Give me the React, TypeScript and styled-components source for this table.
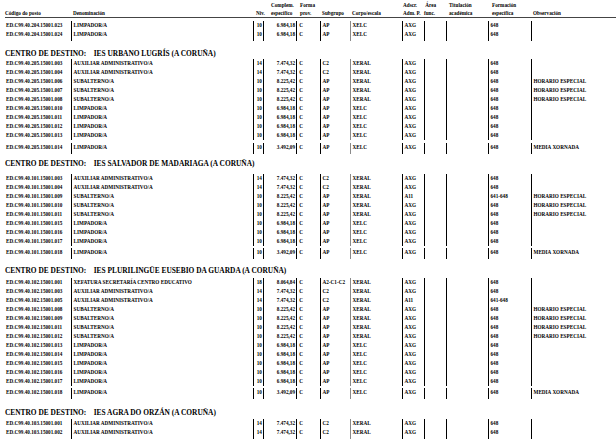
import React from 'react'
import styled, { createGlobalStyle } from 'styled-components'

const GlobalStyle = createGlobalStyle`
  html, body {
    margin: 0;
    padding: 0;
    background: #fff;
  }
  body {
    font-family: 'Liberation Serif', 'Times New Roman', serif;
    color: #000;
  }
`

const COLS = '66px 182px 10px 34px 23px 30px 52px 22px 22px 42px 43px 80px'
const ROW_H = 9

type Line = 'none' | 'black' | 'grey' | 'thick'
type Align = 'left' | 'center' | 'right'

const Page = styled.div`
  width: 616px;
  padding: 0 0 0 5px;
  box-sizing: border-box;
`

const HeadRow = styled.div`
  display: grid;
  grid-template-columns: ${COLS};
  padding-top: 1px;
  border-bottom: 0.8px solid #444;
  font-size: 5.2px;
  font-weight: bold;
  line-height: 8px;
`

const HeadCell = styled.div<{ $shift?: number }>`
  display: flex;
  flex-direction: column;
  justify-content: flex-end;
  padding-left: ${(p) => p.$shift ?? 0}px;
  white-space: nowrap;
  min-height: 16px;
`

const Section = styled.section<{ $top: number }>`
  margin-top: ${(p) => p.$top}px;
`

const SectionTitle = styled.h2<{ $gap: number }>`
  margin: 0 0 ${(p) => p.$gap}px 0;
  font-size: 7.4px;
  font-weight: bold;
  line-height: 8px;
  white-space: pre;
`

const Row = styled.div<{ $extra?: number; $tail?: number }>`
  display: grid;
  grid-template-columns: ${COLS};
  height: ${(p) => ROW_H + (p.$extra ?? 0) + (p.$tail ?? 0)}px;
  padding-top: ${(p) => p.$extra ?? 0}px;
  box-sizing: border-box;
  font-size: 5.2px;
  font-weight: bold;
  line-height: ${ROW_H}px;
  white-space: nowrap;
`

const lineColor: Record<Line, string> = {
  none: 'transparent',
  black: '#000',
  grey: '#8a8a8a',
  thick: '#000',
}

const Cell = styled.div<{ $line?: Line; $align?: Align; $rightLine?: boolean }>`
  box-sizing: border-box;
  overflow: visible;
  margin-top: ${(p) => (p.$line && p.$line !== 'none' ? 0 : 0)}px;
  text-align: ${(p) => p.$align ?? 'left'};
  padding: 0 ${(p) => (p.$align === 'right' ? 1 : 0)}px 0
    ${(p) => (p.$line && p.$line !== 'none' ? 1.5 : 0)}px;
  border-left: ${(p) => (p.$line === 'thick' ? 1.4 : 1)}px solid
    ${(p) => lineColor[p.$line ?? 'none']};
  border-right: ${(p) => (p.$rightLine ? '1px solid #000' : 'none')};
`

// the last row of a block sits a little lower and its rules run on below it
const RowLines = styled.div`
  display: contents;
`

interface Post {
  code: string
  name: string
  niv: string
  comp: string
  sub: string
  corpo: string
  adscr: string
  form: string
  obs?: string
}

interface Centre {
  title?: string
  top: number
  gap: number
  extra: number
  posts: Post[]
}

const limpador = (code: string, comp = '6.984,18', obs?: string): Post => ({
  code,
  name: 'LIMPADOR/A',
  niv: '10',
  comp,
  sub: 'AP',
  corpo: 'XELC',
  adscr: 'AXG',
  form: '648',
  obs,
})

const auxiliar = (code: string, adscr = 'AXG', form = '648'): Post => ({
  code,
  name: 'AUXILIAR ADMINISTRATIVO/A',
  niv: '14',
  comp: '7.474,32',
  sub: 'C2',
  corpo: 'XERAL',
  adscr,
  form,
})

const subalterno = (code: string, adscr = 'AXG', form = '648'): Post => ({
  code,
  name: 'SUBALTERNO/A',
  niv: '10',
  comp: '8.225,42',
  sub: 'AP',
  corpo: 'XERAL',
  adscr,
  form,
  obs: 'HORARIO ESPECIAL',
})

const centres: Centre[] = [
  {
    top: 2.8,
    gap: 0,
    extra: 0,
    posts: [limpador('ED.C99.40.204.15001.023'), limpador('ED.C99.40.204.15001.024')],
  },
  {
    title: 'CENTRO DE DESTINO:    IES URBANO LUGRÍS (A CORUÑA)',
    top: 8.9,
    gap: 1.5,
    extra: 2.5,
    posts: [
      auxiliar('ED.C99.40.205.15001.003'),
      auxiliar('ED.C99.40.205.15001.004'),
      subalterno('ED.C99.40.205.15001.006'),
      subalterno('ED.C99.40.205.15001.007'),
      subalterno('ED.C99.40.205.15001.008'),
      limpador('ED.C99.40.205.15001.010'),
      limpador('ED.C99.40.205.15001.011'),
      limpador('ED.C99.40.205.15001.012'),
      limpador('ED.C99.40.205.15001.013'),
      limpador('ED.C99.40.205.15001.014', '3.492,09', 'MEDIA XORNADA'),
    ],
  },
  {
    title: 'CENTRO DE DESTINO:    IES SALVADOR DE MADARIAGA (A CORUÑA)',
    top: 5.9,
    gap: 6,
    extra: 2.5,
    posts: [
      auxiliar('ED.C99.40.101.15001.003'),
      auxiliar('ED.C99.40.101.15001.004'),
      subalterno('ED.C99.40.101.15001.009', 'A11', '641-648'),
      subalterno('ED.C99.40.101.15001.010'),
      subalterno('ED.C99.40.101.15001.011'),
      limpador('ED.C99.40.101.15001.015'),
      limpador('ED.C99.40.101.15001.016'),
      limpador('ED.C99.40.101.15001.017'),
      limpador('ED.C99.40.101.15001.018', '3.492,09', 'MEDIA XORNADA'),
    ],
  },
  {
    title: 'CENTRO DE DESTINO:    IES PLURILINGÜE EUSEBIO DA GUARDA (A CORUÑA)',
    top: 7.5,
    gap: 3,
    extra: 2.5,
    posts: [
      {
        code: 'ED.C99.40.102.15001.001',
        name: 'XEFATURA SECRETARÍA CENTRO EDUCATIVO',
        niv: '18',
        comp: '8.064,84',
        sub: 'A2-C1-C2',
        corpo: 'XERAL',
        adscr: 'AXG',
        form: '648',
      },
      auxiliar('ED.C99.40.102.15001.003'),
      auxiliar('ED.C99.40.102.15001.005', 'A11', '641-648'),
      subalterno('ED.C99.40.102.15001.008'),
      subalterno('ED.C99.40.102.15001.009'),
      subalterno('ED.C99.40.102.15001.011'),
      subalterno('ED.C99.40.102.15001.012'),
      limpador('ED.C99.40.102.15001.013'),
      limpador('ED.C99.40.102.15001.014'),
      limpador('ED.C99.40.102.15001.015'),
      limpador('ED.C99.40.102.15001.016'),
      limpador('ED.C99.40.102.15001.017'),
      limpador('ED.C99.40.102.15001.018', '3.492,09', 'MEDIA XORNADA'),
    ],
  },
  {
    title: 'CENTRO DE DESTINO:    IES AGRA DO ORZÁN (A CORUÑA)',
    top: 10,
    gap: 2,
    extra: 0,
    posts: [auxiliar('ED.C99.40.103.15001.001'), auxiliar('ED.C99.40.103.15001.002')],
  },
]

const PostRow = ({ post, extra, tail }: { post: Post; extra?: number; tail?: number }) => (
  <Row $extra={extra} $tail={tail}>
    <RowLines>
      <Cell>{post.code}</Cell>
      <Cell $line='black'>{post.name}</Cell>
      <Cell $line='black' $align='center'>
        {post.niv}
      </Cell>
      <Cell $line='black' $align='right' $rightLine>
        {post.comp}
      </Cell>
      <Cell>&nbsp;C</Cell>
      <Cell $line='black'>{post.sub}</Cell>
      <Cell $line='grey'>{post.corpo}</Cell>
      <Cell $line='black'>{post.adscr}</Cell>
      <Cell $line='black' />
      <Cell $line='black' />
      <Cell $line='black'>{post.form}</Cell>
      <Cell $line='thick'>{post.obs}</Cell>
    </RowLines>
  </Row>
)

const Header = () => (
  <HeadRow>
    <HeadCell>Código do posto</HeadCell>
    <HeadCell $shift={2}>Denominación</HeadCell>
    <HeadCell $shift={3}>Niv.</HeadCell>
    <HeadCell $shift={8}>
      <span>Complem.</span>
      <span>específico</span>
    </HeadCell>
    <HeadCell $shift={3}>
      <span>Forma</span>
      <span>prov.</span>
    </HeadCell>
    <HeadCell $shift={2}>Subgrupo</HeadCell>
    <HeadCell $shift={2}>Corpo/escala</HeadCell>
    <HeadCell $shift={1}>
      <span>Adscr.</span>
      <span>Adm. P.</span>
    </HeadCell>
    <HeadCell $shift={0}>
      <span>&nbsp;Área</span>
      <span>func.</span>
    </HeadCell>
    <HeadCell $shift={3}>
      <span>Titulación</span>
      <span>académica</span>
    </HeadCell>
    <HeadCell $shift={4}>
      <span>Formación</span>
      <span>específica</span>
    </HeadCell>
    <HeadCell $shift={2}>Observación</HeadCell>
  </HeadRow>
)

export default function App() {
  return (
    <>
      <GlobalStyle />
      <Page>
        <Header />
        {centres.map((c, i) => (
          <Section key={i} $top={c.top}>
            {c.title && <SectionTitle $gap={c.gap}>{c.title}</SectionTitle>}
            {c.posts.map((p, j) => {
              const last = j === c.posts.length - 1
              return (
                <PostRow
                  key={p.code}
                  post={p}
                  extra={last ? c.extra : 0}
                  tail={last ? 2 : 0}
                />
              )
            })}
          </Section>
        ))}
      </Page>
    </>
  )
}
